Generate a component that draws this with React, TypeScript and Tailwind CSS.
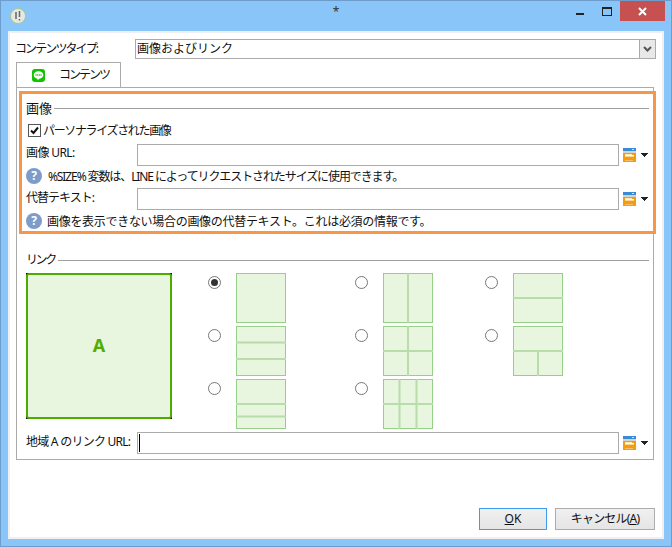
const font = "font-['Noto_Sans','Noto_Sans_CJK_JP',sans-serif]";

function Thumb({ lines }: { lines: string[] }) {
  return (
    <svg width="50" height="50" viewBox="0 0 50 50" className="block shrink-0">
      <rect x="0.5" y="0.5" width="49" height="49" fill="#e8f5df" stroke="#96cf87" />
      {lines.map((d) => (
        <path key={d} d={d} stroke="#b8dcaa" strokeWidth="2" fill="none" />
      ))}
    </svg>
  );
}

function Radio({ checked }: { checked?: boolean }) {
  return (
    <div className="w-[13px] h-[13px] mt-[3px] rounded-full border border-[#777] bg-white flex items-center justify-center shrink-0">
      {checked && <div className="w-[7px] h-[7px] rounded-full bg-[#333]" />}
    </div>
  );
}

function Option({ lines, checked }: { lines: string[]; checked?: boolean }) {
  return (
    <div className="flex gap-[15px]">
      <Radio checked={checked} />
      <Thumb lines={lines} />
    </div>
  );
}

function PickerIcon() {
  return (
    <div className="flex items-center shrink-0">
      <svg width="13" height="14" viewBox="0 0 13 14" className="block">
        <rect width="13" height="3" fill="#3a8ad6" />
        <rect x="9" y="1" width="2" height="1" fill="#cfe6fa" />
        <rect y="3" width="13" height="2" fill="#d8d2c4" />
        <rect y="5" width="13" height="9" fill="#f39c12" />
        <rect x="2" y="6" width="7" height="1" fill="#fde7bd" />
        <rect x="2" y="7" width="9" height="1" fill="#fff" />
        <rect x="2" y="8" width="9" height="1" fill="#fbd593" />
        <rect x="2" y="12" width="8" height="1" fill="#f8c063" />
      </svg>
      <svg width="7" height="4" viewBox="0 0 7 4" className="block ml-[5px]">
        <path d="M0 0h7v1H6v1H5v1H4v1H3V3H2V2H1V1H0z" fill="#222" />
      </svg>
    </div>
  );
}

function InfoIcon() {
  return (
    <div className="w-4 h-4 rounded-full bg-[#7d9cc9] text-white text-[12px] font-bold leading-4 text-center shrink-0">
      ?
    </div>
  );
}

export default function App() {
  return (
    <div className={`w-[672px] h-[547px] bg-[#8ac5f9] border border-[#6f9dcb] flex flex-col overflow-hidden text-[12px] leading-4 text-[#111] whitespace-nowrap ${font}`}>
      {/* title bar */}
      <div className="h-[30px] flex items-start shrink-0 pl-[9px]">
        <svg width="16" height="16" viewBox="0 0 16 16" className="mt-[7px] shrink-0">
          <circle cx="8" cy="8" r="7.5" fill="#e6e8e2" stroke="#a9c98a" />
          <path d="M6 4v7M9.5 3v6M9.5 11v1.5" stroke="#666" strokeWidth="1.5" fill="none" />
        </svg>
        <div className="flex-1 text-center pt-[3px] text-[12px] pl-[70px] text-[#333]">*</div>
        <div className="w-[8px] h-[2px] bg-[#222] mt-[12px]" />
        <div className="w-[10px] h-[9px] ml-[18px] mt-[6px] border border-[#222] border-t-2" />
        <div className="w-[45px] h-[20px] ml-[8px] mr-[6px] bg-[#c75050] flex items-center justify-center">
          <svg width="9" height="9" viewBox="0 0 9 9">
            <path d="M1 1l7 7M8 1L1 8" stroke="#fff" strokeWidth="2" />
          </svg>
        </div>
      </div>

      {/* client */}
      <div className="mx-[7px] h-[508px] bg-white border-2 border-[#f0f0f0]">
        <div className="flex mt-[6px] ml-[5px] mr-[6px] h-5">
          <div className="w-[120px] leading-[20px] tracking-[-1.9px]">コンテンツタイプ:</div>
          <div className="flex-1 flex border border-[#ababab]">
            <div className="flex-1 pl-px leading-[18px]">画像およびリンク</div>
            <div className="w-4 bg-[#e8e8e8] border-l border-[#ababab] flex items-center justify-center">
              <svg width="9" height="6" viewBox="0 0 9 6">
                <path d="M1 1l3.5 3.5L8 1" stroke="#555" strokeWidth="2" fill="none" />
              </svg>
            </div>
          </div>
        </div>

        {/* tab */}
        <div className="ml-[6px] mt-[3px] w-[105px] h-[25px] border border-b-0 border-[#ababab] flex items-center pl-[15px]">
          <svg width="13" height="13" viewBox="0 0 13 13" className="shrink-0">
            <rect width="13" height="13" rx="3" fill="#12c400" />
            <ellipse cx="6.5" cy="6" rx="4.8" ry="3.8" fill="#fff" />
            <path d="M5.5 9l0 2.2 2.4-2z" fill="#fff" />
            <path d="M4 5v2M5.7 5v2M7.3 5v2M9 5v2" stroke="#12c400" strokeWidth="0.8" />
          </svg>
          <span className="ml-[14px] tracking-[-2px]">コンテンツ</span>
        </div>

        <div className="ml-[6px] mr-[8px] h-[373px] border border-[#ababab]">
          {/* image section */}
          <div className="mt-[3px] ml-[2px] -mr-[3px] h-[143px] border-[3px] border-[#f79646] pl-1 pr-1">
            <div className="flex items-center h-4 mt-[6px]">
              <span className="text-[13px] leading-4">画像</span>
              <div className="flex-1 h-px bg-[#a0a0a0] ml-[2px]" />
            </div>
            <div className="flex items-center h-4 mt-[6px] pl-[2px]">
              <div className="w-[13px] h-[13px] border border-[#555] flex items-center justify-center">
                <svg width="9" height="9" viewBox="0 0 9 9">
                  <path d="M1 4.5l2.5 2.5L8 1.5" stroke="#111" strokeWidth="2" fill="none" />
                </svg>
              </div>
              <span className="ml-[2px] mt-[2px] tracking-[-1.35px]">パーソナライズされた画像</span>
            </div>
            <div className="flex items-center h-[22px] mt-[6px]">
              <div className="w-[111px] -mt-[4px] tracking-[-0.6px]">画像 URL:</div>
              <div className="w-[482px] h-full border border-[#ababab]" />
              <div className="ml-[4px]">
                <PickerIcon />
              </div>
            </div>
            <div className="flex items-center h-5">
              <InfoIcon />
              <span className="ml-[6px] mt-[2px] tracking-[-1.1px]">%SIZE% 変数は、LINE によってリクエストされたサイズに使用できます。</span>
            </div>
            <div className="flex items-center h-[22px] mt-[2px]">
              <div className="w-[111px] -mt-[2px] tracking-[-1px]">代替テキスト:</div>
              <div className="w-[482px] h-full border border-[#ababab]" />
              <div className="ml-[4px]">
                <PickerIcon />
              </div>
            </div>
            <div className="flex items-center h-[21px]">
              <InfoIcon />
              <span className="ml-[5px] mt-[2px] tracking-[-0.3px]">画像を表示できない場合の画像の代替テキスト。これは必須の情報です。</span>
            </div>
          </div>

          {/* link section */}
          <div className="mt-[18px] pl-[9px] pr-1">
            <div className="flex items-center h-4">
              <span className="tracking-[-2.4px]">リンク</span>
              <div className="flex-1 h-px bg-[#a0a0a0] ml-[3px]" />
            </div>
            <div className="flex mt-[5px]">
              <div className="w-[146px] h-[146px] bg-black shrink-0">
                <div className="w-full h-full rounded-[3px] bg-[#e8f5df] border-2 border-[#4cac00] flex items-center justify-center pb-[2px] text-[18px] font-bold text-[#52ad00]">
                  A
                </div>
              </div>
              <div className="ml-9 grid grid-cols-[147px_130px_78px] gap-y-[3px] content-start">
                <Option checked lines={[]} />
                <Option lines={["M25 0v50"]} />
                <Option lines={["M0 25h50"]} />
                <Option lines={["M0 16.5h50", "M0 33h50"]} />
                <Option lines={["M25 0v50", "M0 25h50"]} />
                <Option lines={["M0 25h50", "M25 25v25"]} />
                <Option lines={["M0 25h50", "M0 37.5h50"]} />
                <Option lines={["M16.5 0v50", "M33.5 0v50", "M0 25h50"]} />
              </div>
            </div>
            <div className="flex items-center h-[22px] mt-[3px]">
              <div className="w-[111px] -mt-[2px] tracking-[-0.75px]">地域 A のリンク URL:</div>
              <div className="w-[482px] h-full border border-[#ababab] flex items-center pl-px">
                <div className="w-px h-[18px] bg-black" />
              </div>
              <div className="ml-[4px]">
                <PickerIcon />
              </div>
            </div>
          </div>
        </div>

        {/* footer */}
        <div className="flex justify-end gap-2 mt-[48px] pr-[7px]">
          <div className="w-[68px] h-[22px] border border-[#3c9cf0] bg-gradient-to-b from-[#f0f0f0] to-[#e5e5e5] text-center leading-5">
            <span className="underline">O</span>K
          </div>
          <div className="w-[100px] h-[22px] border border-[#acacac] bg-gradient-to-b from-[#f0f0f0] to-[#e5e5e5] text-center leading-5 tracking-[-0.8px]">
            キャンセル(<span className="underline">A</span>)
          </div>
        </div>
      </div>
    </div>
  );
}
